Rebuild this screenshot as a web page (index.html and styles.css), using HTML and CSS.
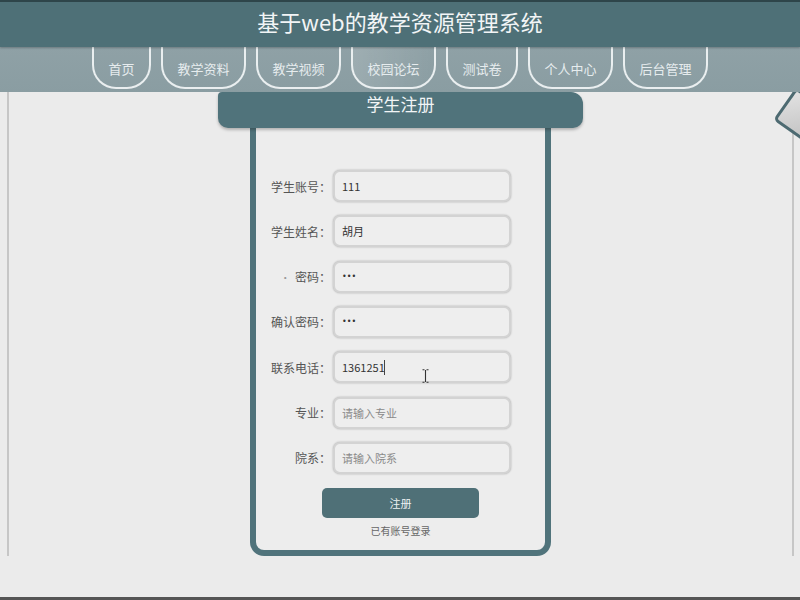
FILE: index.html
```html
<!DOCTYPE html>
<html lang="zh-CN">
<head>
<meta charset="utf-8">
<title>学生注册</title>
<link rel="stylesheet" href="styles.css">
</head>
<body>
<header class="topbar">
  <h1 class="site-title">基于web的教学资源管理系统</h1>
</header>
<nav class="nav">
  <ul class="nav-list">
    <li class="nav-item">首页</li>
    <li class="nav-item">教学资料</li>
    <li class="nav-item">教学视频</li>
    <li class="nav-item nav-item-hover">校园论坛</li>
    <li class="nav-item">测试卷</li>
    <li class="nav-item">个人中心</li>
    <li class="nav-item">后台管理</li>
  </ul>
</nav>
<main class="main">
  <div class="frame">
    <section class="panel">
      <div class="panel-title">学生注册</div>
      <form class="card">
        <div class="form-grid">
          <label class="label">学生账号：</label>
          <input class="field" type="text" value="111">
          <label class="label">学生姓名：</label>
          <input class="field" type="text" value="胡月">
          <label class="label"><span class="stray">·</span> 密码：</label>
          <input class="field" type="password" value="123">
          <label class="label">确认密码：</label>
          <input class="field" type="password" value="123">
          <label class="label">联系电话：</label>
          <div class="field-wrap">
            <input class="field" type="text" value="1361251">
            <span class="caret"></span>
            <svg class="ibeam" width="7" height="14" viewBox="0 0 7 14"><path d="M0.5 0.8h2M4.5 0.8h2M3.5 1v12M0.5 13.2h2M4.5 13.2h2" stroke="#333" stroke-width="1.1" fill="none"/></svg>
          </div>
          <label class="label">专业：</label>
          <input class="field" type="text" placeholder="请输入专业">
          <label class="label">院系：</label>
          <input class="field" type="text" placeholder="请输入院系">
        </div>
        <button class="submit" type="button">注册</button>
        <a class="login-link">已有账号登录</a>
      </form>
    </section>
  </div>
  <div class="ornament"></div>
</main>
<div class="bottom-line"></div>
</body>
</html>
```
FILE: styles.css
```css
* { box-sizing: border-box; }
html, body { margin: 0; padding: 0; }
body {
  width: 800px;
  height: 600px;
  overflow: hidden;
  background: #ebebeb;
  font-family: "Noto Sans CJK SC", "Noto Sans", sans-serif;
  color: #555;
}
.topbar {
  height: 47px;
  background: #4e7077;
  border-top: 2px solid #2e454a;
  box-shadow: 0 1px 2px rgba(0,0,0,0.25);
  position: relative;
  z-index: 2;
}
.site-title {
  margin: 0;
  text-align: center;
  font-weight: normal;
  font-size: 22px;
  line-height: 39px;
  color: #f2f5f6;
}
.nav {
  height: 45px;
  background: linear-gradient(#8fa1a6, #8a9da2);
}
.nav-list {
  margin: 0;
  padding: 0;
  list-style: none;
  display: flex;
  justify-content: center;
  gap: 10px;
}
.nav-item {
  height: 42px;
  padding: 0 14.5px;
  font-size: 13px;
  line-height: 44px;
  color: #e6ecee;
  border: 2px solid rgba(244,248,249,0.9);
  border-top: none;
  border-radius: 0 0 24px 24px;
}
.nav-item-hover {
  background: linear-gradient(90deg, rgba(255,255,255,0.14), rgba(255,255,255,0));
}
.main {
  height: 505px;
  position: relative;
  overflow: hidden;
}
.frame {
  margin: 0 6px 0 7px;
  height: 464px;
  border-left: 2px solid #c6c6c6;
  border-right: 2px solid #c6c6c6;
  display: flex;
  justify-content: center;
}
.panel {
  display: flex;
  flex-direction: column;
  align-items: center;
}
.panel-title {
  width: 365px;
  height: 36px;
  background: #50737b;
  border-radius: 4px 12px 10px 10px;
  color: #f2f5f6;
  font-size: 17px;
  line-height: 23px;
  text-align: center;
  box-shadow: 0 2px 3px rgba(0,0,0,0.25);
  position: relative;
  z-index: 1;
}
.card {
  width: 301px;
  height: 428px;
  margin: 0;
  border: 6px solid #50737b;
  border-top: none;
  border-radius: 0 0 14px 14px;
  background: #ededed;
  padding-top: 42px;
  display: flex;
  flex-direction: column;
  align-items: center;
}
.form-grid {
  align-self: flex-start;
  display: grid;
  grid-template-columns: 71px 178px;
  column-gap: 6px;
  row-gap: 13.33px;
  align-items: center;
}
.label {
  font-size: 12px;
  color: #555;
  text-align: right;
  white-space: nowrap;
  margin-right: -4px;
}
.stray { color: #999; font-size: 10px; margin-right: 2px; }
.field {
  display: block;
  width: 178px;
  height: 32px;
  margin: 0;
  padding: 0 7px;
  border: 2px solid #d3d3d3;
  border-radius: 7px;
  background: #eeeeee;
  box-shadow: 0 0 2px rgba(0,0,0,0.3);
  font-family: "Noto Sans CJK SC", "Noto Sans", sans-serif;
  font-size: 11px;
  color: #333;
  outline: none;
}
.field::placeholder { color: #8a8a8a; }
.field[type="password"] { font-family: "DejaVu Sans", sans-serif; font-size: 8px; letter-spacing: 0; }
.field-wrap { position: relative; }
.caret {
  position: absolute;
  left: 51px;
  top: 9px;
  width: 1px;
  height: 15px;
  background: #444;
}
.ibeam {
  position: absolute;
  left: 89px;
  top: 18px;
}
.submit {
  margin-top: 14px;
  width: 157px;
  height: 30px;
  border: none;
  border-radius: 5px;
  background: #4f7077;
  color: #eef2f3;
  font-family: "Noto Sans CJK SC", "Noto Sans", sans-serif;
  font-size: 11px;
}
.login-link {
  margin-top: 5px;
  font-size: 10px;
  color: #666;
  line-height: 16px;
}
.ornament {
  position: absolute;
  left: 781px;
  top: 3px;
  width: 40px;
  height: 40px;
  border: 3px solid #4d6a71;
  border-radius: 5px;
  background: linear-gradient(135deg, #e2e2e2, #c2c2c2);
  transform: rotate(35deg);
}
.bottom-line {
  height: 3px;
  background: #555;
}
```
